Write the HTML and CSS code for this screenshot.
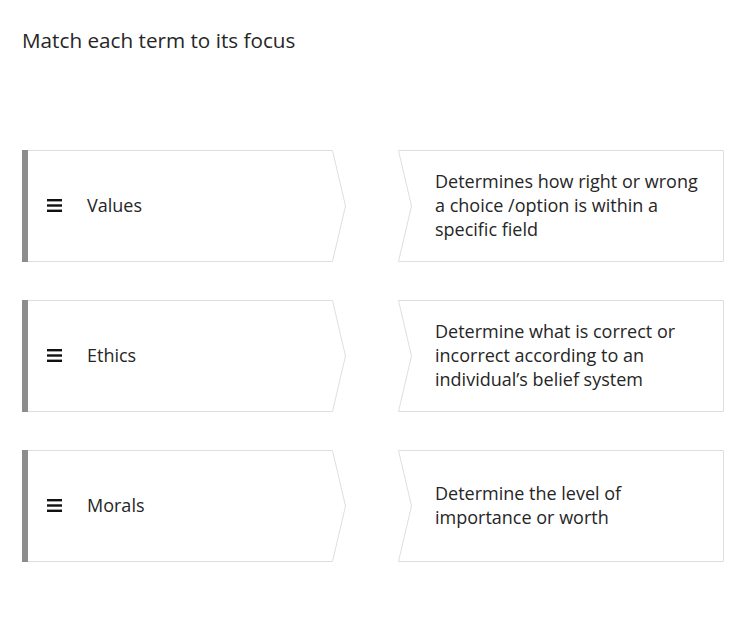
FILE: index.html
```html
<!DOCTYPE html>
<html>
<head>
<meta charset="utf-8">
<link rel="stylesheet" href="styles.css">
</head>
<body>
<div class="page">
  <h1 class="title">Match each term to its focus</h1>
  <div class="rows">
    <div class="row">
      <div class="term">
        <svg class="shape" viewBox="0 0 324 112" preserveAspectRatio="none"><polygon points="0.5,0.5 310.5,0.5 323.5,56 310.5,111.5 0.5,111.5" /></svg>
        <div class="bar"></div>
        <svg class="grip" width="15" height="13" viewBox="0 0 15 13"><rect x="0" y="0" width="15" height="2.4"/><rect x="0" y="5.3" width="15" height="2.4"/><rect x="0" y="10.6" width="15" height="2.4"/></svg>
        <span class="label">Values</span>
      </div>
      <div class="focus">
        <svg class="shape" viewBox="0 0 326 112" preserveAspectRatio="none"><polygon points="0.5,0.5 325.5,0.5 325.5,111.5 0.5,111.5 13.5,56" /></svg>
        <p class="desc">Determines how right or wrong a choice /option is within a specific field</p>
      </div>
    </div>
    <div class="row">
      <div class="term">
        <svg class="shape" viewBox="0 0 324 112" preserveAspectRatio="none"><polygon points="0.5,0.5 310.5,0.5 323.5,56 310.5,111.5 0.5,111.5" /></svg>
        <div class="bar"></div>
        <svg class="grip" width="15" height="13" viewBox="0 0 15 13"><rect x="0" y="0" width="15" height="2.4"/><rect x="0" y="5.3" width="15" height="2.4"/><rect x="0" y="10.6" width="15" height="2.4"/></svg>
        <span class="label">Ethics</span>
      </div>
      <div class="focus">
        <svg class="shape" viewBox="0 0 326 112" preserveAspectRatio="none"><polygon points="0.5,0.5 325.5,0.5 325.5,111.5 0.5,111.5 13.5,56" /></svg>
        <p class="desc">Determine what is correct or incorrect according to an individual’s belief system</p>
      </div>
    </div>
    <div class="row">
      <div class="term">
        <svg class="shape" viewBox="0 0 324 112" preserveAspectRatio="none"><polygon points="0.5,0.5 310.5,0.5 323.5,56 310.5,111.5 0.5,111.5" /></svg>
        <div class="bar"></div>
        <svg class="grip" width="15" height="13" viewBox="0 0 15 13"><rect x="0" y="0" width="15" height="2.4"/><rect x="0" y="5.3" width="15" height="2.4"/><rect x="0" y="10.6" width="15" height="2.4"/></svg>
        <span class="label">Morals</span>
      </div>
      <div class="focus">
        <svg class="shape" viewBox="0 0 326 112" preserveAspectRatio="none"><polygon points="0.5,0.5 325.5,0.5 325.5,111.5 0.5,111.5 13.5,56" /></svg>
        <p class="desc">Determine the level of importance or worth</p>
      </div>
    </div>
  </div>
</div>
</body>
</html>
```
FILE: styles.css
```css
* { box-sizing: border-box; }
html, body { margin: 0; padding: 0; background: #fff; }
body {
  font-family: "Open Sans", "Liberation Sans", sans-serif;
  color: #262626;
}
.page {
  padding: 26px 0 0 22px;
  width: 753px;
}
.title {
  margin: 0;
  font-size: 20.7px;
  line-height: 28px;
  font-weight: 400;
  color: #262626;
}
.rows {
  margin-top: 96px;
  display: flex;
  flex-direction: column;
  gap: 38px;
}
.row {
  display: flex;
  gap: 52px;
  height: 112px;
}
.term {
  position: relative;
  width: 324px;
  height: 112px;
  display: flex;
  align-items: center;
}
.focus {
  position: relative;
  width: 326px;
  height: 112px;
  display: flex;
  align-items: center;
}
.shape {
  position: absolute;
  left: 0;
  top: 0;
  width: 100%;
  height: 100%;
}
.shape polygon {
  fill: #fff;
  stroke: #dedede;
  stroke-width: 1;
}
.bar {
  position: relative;
  align-self: stretch;
  width: 6px;
  background: #8c8c8c;
}
.grip {
  position: relative;
  margin-left: 19px;
  margin-bottom: 1px;
  fill: #111;
}
.label {
  position: relative;
  margin-left: 25px;
  padding-bottom: 2px;
  font-size: 18px;
  line-height: 24px;
  color: #262626;
}
.desc {
  position: relative;
  margin: 0;
  padding: 0 18px 2px 37px;
  font-size: 18px;
  line-height: 24px;
  color: #262626;
}
```
